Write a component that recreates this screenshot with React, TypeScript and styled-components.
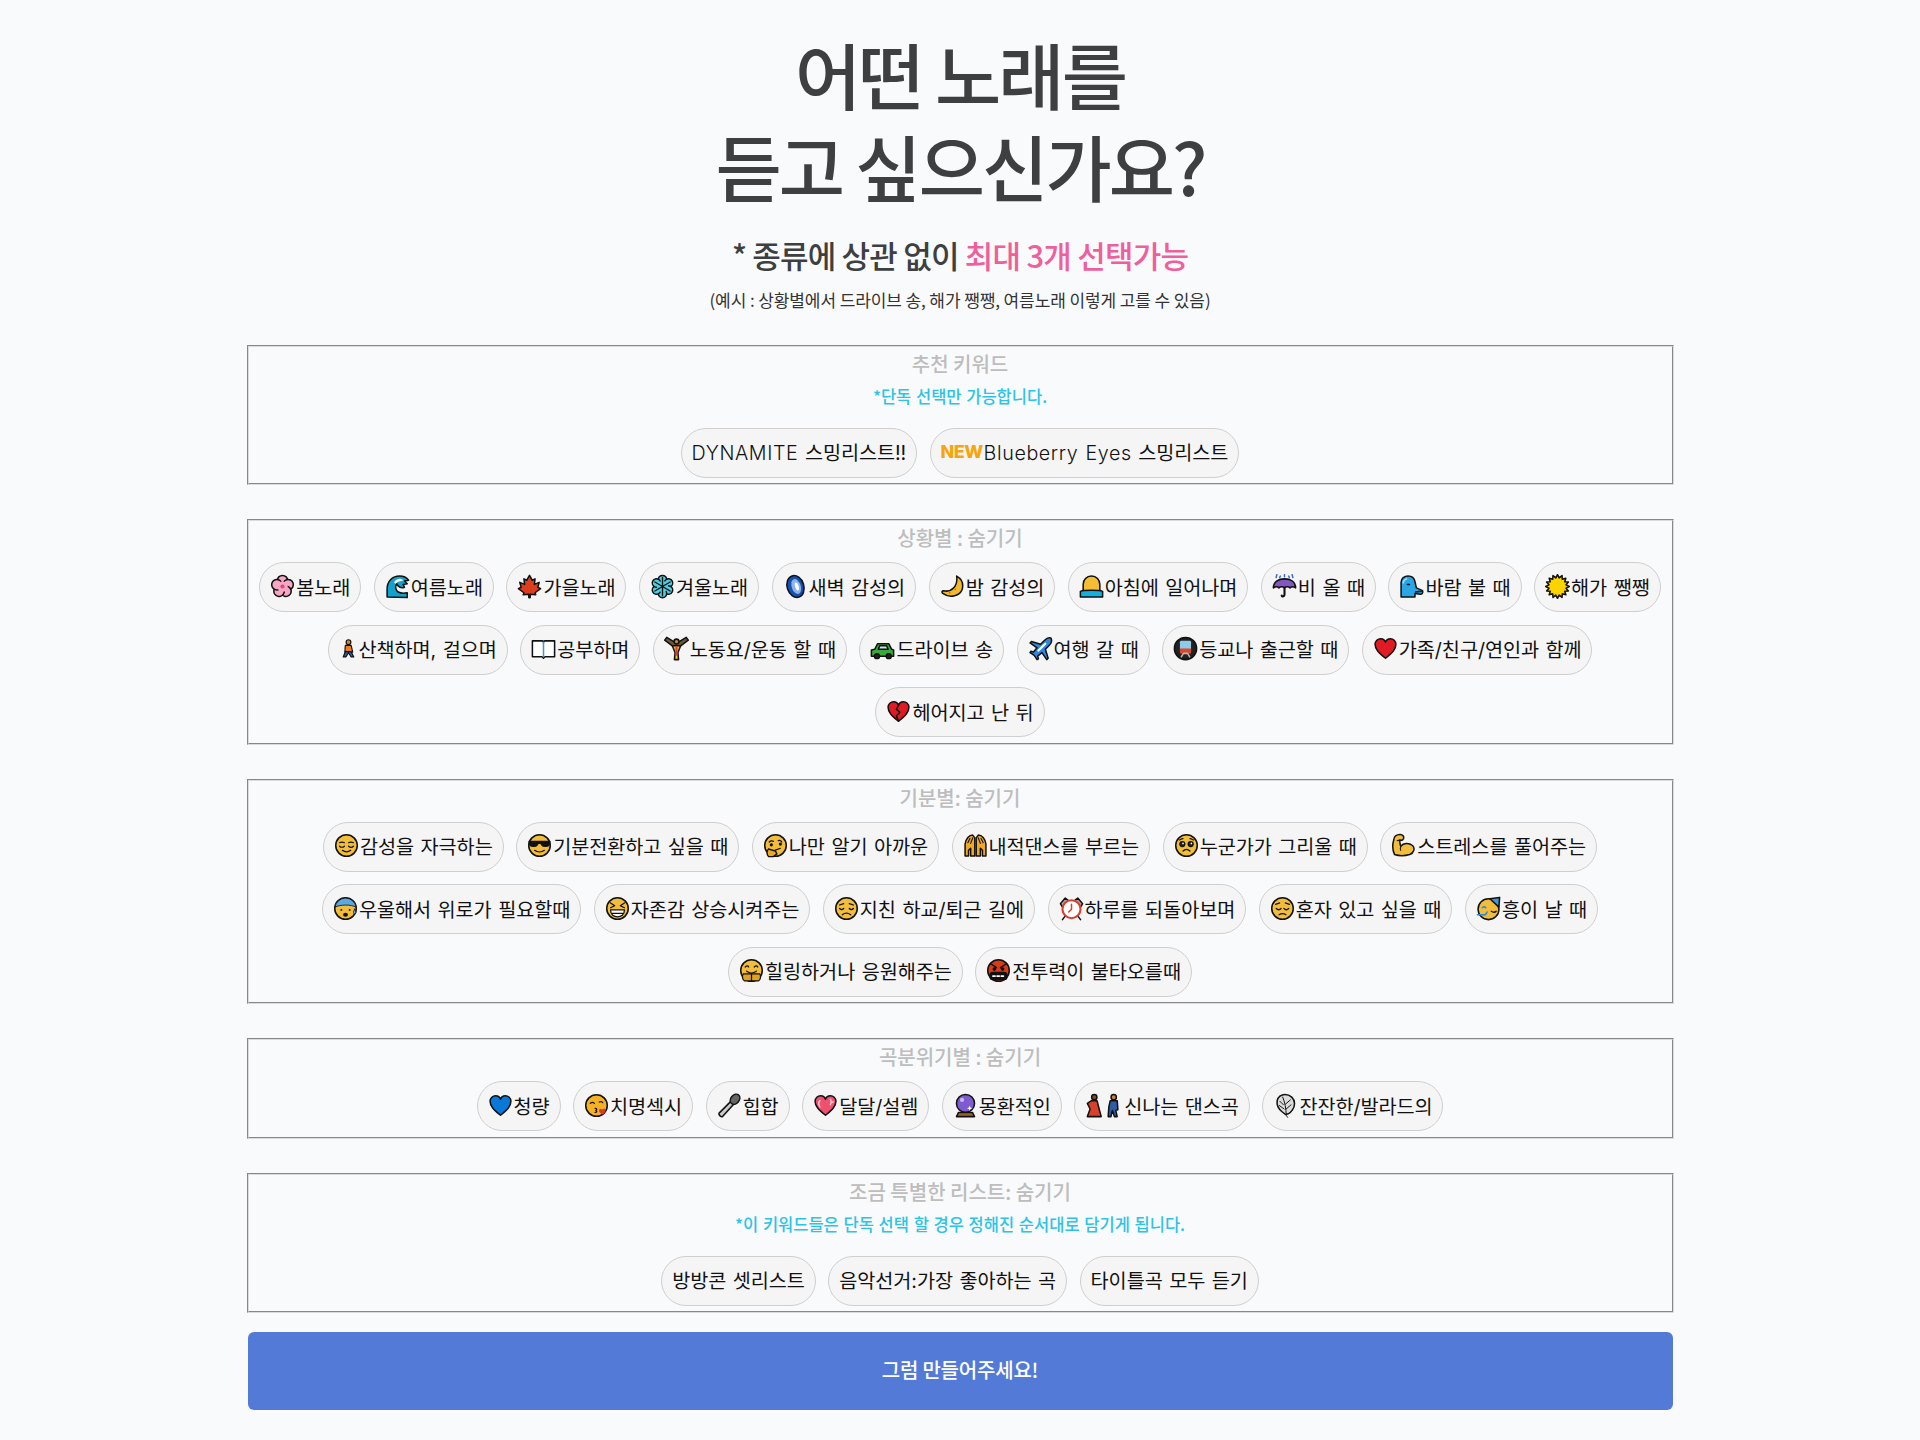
import React from "react";
import styled, { createGlobalStyle } from "styled-components";

const GlobalStyle = createGlobalStyle`
  body {
    margin: 0;
    background: #f9fafb;
    color: #222;
    font-family: "Noto Sans CJK KR", sans-serif;
  }
`;

const Page = styled.main`
  width: 1427px;
  margin: 0 auto;
  padding: 27px 0 30px;
`;

const Title = styled.h1`
  margin: 0;
  text-align: center;
  font-size: 72px;
  line-height: 92px;
  font-weight: 500;
  letter-spacing: -2.9px;
  color: #3d3f41;
`;

const Subtitle = styled.h2`
  margin: 24px 0 0;
  text-align: center;
  font-size: 31px;
  line-height: 40px;
  font-weight: 500;
  letter-spacing: -0.8px;
  color: #3d3f41;
`;

const Pink = styled.span`
  color: #ef5f9c;
`;

const Example = styled.p`
  margin: 12.5px 0 33.3px;
  text-align: center;
  font-size: 17px;
  line-height: 24px;
  letter-spacing: -0.1px;
  color: #333;
`;

const Section = styled.section`
  border: 2px groove #dcdcdc;
  padding: 0 0 5.5px;
  margin-bottom: 34px;

  &:last-of-type {
    margin-bottom: 18.7px;
  }
`;

const SectionTitle = styled.h3`
  margin: 0;
  height: 41px;
  padding-top: 2px;
  box-sizing: border-box;
  text-align: center;
  font-size: 20px;
  line-height: 30px;
  font-weight: 500;
  letter-spacing: 0;
  color: #bdbdbd;
`;

const Note = styled.p`
  margin: 0;
  height: 40px;
  text-align: center;
  font-size: 16.5px;
  line-height: 17px;
  font-weight: 500;
  letter-spacing: 0;
  word-spacing: 1px;
  color: #2bc4e6;
`;

const ChipRow = styled.div`
  display: flex;
  flex-wrap: wrap;
  justify-content: center;
  column-gap: 12.5px;
  row-gap: 12.5px;
`;

const Chip = styled.button`
  display: inline-flex;
  align-items: center;
  gap: 1px;
  height: 50px;
  padding: 0 10px 2px;
  border: 1px solid #cfcfcf;
  border-radius: 25px;
  background: #f5f5f5;
  color: #111;
  font-family: Inter, "Noto Sans CJK KR", sans-serif;
  font-size: 19.7px;
  letter-spacing: -0.1px;
  word-spacing: 1.1px;
  white-space: pre;
`;

const NewTag = styled.span`
  color: #f5a50f;
  font-weight: 800;
  font-size: 18px;
  letter-spacing: -0.6px;
`;

const LatinText = styled.span`
  font-weight: 300;
  letter-spacing: 0.6px;
`;

const Submit = styled.button`
  display: block;
  width: 1425px;
  height: 78px;
  margin: 0 auto;
  padding: 0 0 2px;
  border: 0;
  border-radius: 6px;
  background: #527ad6;
  color: #fff;
  font-family: "Noto Sans CJK KR", sans-serif;
  font-size: 20px;
  font-weight: 500;
  letter-spacing: -0.2px;
`;

const EmojiIcon = styled.svg<{ $width: number }>`
  width: ${(p) => p.$width}px;
  height: 25px;
  flex: none;
  stroke: #111;
  stroke-width: 2.2;
  stroke-linejoin: round;
  stroke-linecap: round;
`;

const burst = (n: number, r1: number, r2: number) =>
  Array.from({ length: n * 2 }, (_, i) => {
    const a = (i * Math.PI) / n;
    const r = i % 2 ? r2 : r1;
    return `${(18 + r * Math.sin(a)).toFixed(1)},${(18 - r * Math.cos(a)).toFixed(1)}`;
  }).join(" ");

const FACE = "#f2bd3a";

const Face = ({ fill = FACE, children }: { fill?: string; children?: React.ReactNode }) => (
  <>
    <circle cx="18" cy="18" r="15.5" fill={fill} />
    <g fill="none" strokeWidth="1.8">
      {children}
    </g>
  </>
);

const HEART = "M18 32C8 24 3 19 3 12c0-5 4-8 8-8 3 0 6 2 7 5 1-3 4-5 7-5 4 0 8 3 8 8 0 7-5 12-15 20z";

const icons: Record<string, React.ReactNode> = {
  blossom: (
    <>
      {[0, 72, 144, 216, 288].map((r) => (
        <circle key={r} cx="18" cy="9.5" r="7.5" fill="#f7a6c4" transform={`rotate(${r} 18 18)`} />
      ))}
      <circle cx="18" cy="18" r="7.5" fill="#f7a6c4" stroke="none" />
      <circle cx="18" cy="18" r="3" fill="#e8437f" stroke="none" />
    </>
  ),
  wave: (
    <>
      <path d="M3 33V22C3 10 11 3 21 3c5 0 10 2 13 6l-6 1 4 4-6 1 2 4c-5 2-10-1-11-5-3 3-2 9 2 12 4 2 8 2 13 1v7z" fill="#12a2cc" />
      <path d="M13 12c2-3 5-5 9-5l5 2-4 1-4 1-4 3z" fill="#fff" stroke="none" />
    </>
  ),
  maple: (
    <polygon
      points="18,2 22,9 26,7 25,15 32,12 30,19 34,21 26,27 27,30 19,29 19,34 17,34 17,29 9,30 10,27 2,21 6,19 4,12 11,15 10,7 14,9"
      fill="#dc3d1c"
    />
  ),
  snow: (
    <>
      {[0, 60, 120, 180, 240, 300].map((r) => (
        <circle key={r} cx="18" cy="8" r="6" fill="#4fcfe4" transform={`rotate(${r} 18 18)`} />
      ))}
      <circle cx="18" cy="18" r="8" fill="#4fcfe4" stroke="none" />
      <path d="M18 5v26M7 11.5l22 13M7 24.5l22-13" fill="none" strokeWidth="2" />
    </>
  ),
  dawn: (
    <>
      <ellipse cx="18" cy="18" rx="12" ry="16" fill="#1552b0" transform="rotate(-18 18 18)" />
      <ellipse cx="19" cy="18" rx="6.5" ry="11" fill="#8fb2ee" stroke="none" transform="rotate(-18 19 18)" />
      <ellipse cx="20" cy="18" rx="2.5" ry="6" fill="#fff" stroke="none" transform="rotate(-18 20 18)" />
    </>
  ),
  moon: (
    <>
      <path d="M24 3c7 4 10 11 8 19-3 9-17 14-28 6-2-2-1-4 1-4 11 3 21-6 19-21z" fill="#f2b92e" />
      <circle cx="22" cy="22" r="1.3" fill="#b5821a" stroke="none" />
      <circle cx="14" cy="27" r="1.3" fill="#b5821a" stroke="none" />
    </>
  ),
  sunrise: (
    <>
      <path d="M6 26V15C6 8 11 3 18 3s12 5 12 12v11z" fill="#f5bd33" />
      <path d="M2 25c5-2 27-2 32 0v8H2z" fill="#14b0e0" />
    </>
  ),
  umbrella: (
    <>
      <path d="M2 20C2 11 9 7 18 7s16 4 16 13c-3-2-6-2-8 0-2-2-6-2-8 0-2-2-6-2-8 0-2-2-5-2-8 0z" fill="#8258c0" />
      <path d="M18 20v10c0 3-4 3-4 1" fill="none" strokeWidth="3" />
      <path d="M7 1l-1 4M18 1v3M29 1l1 4M12 3l-1 2M24 3l1 2" fill="none" stroke="#3a6ec8" />
    </>
  ),
  wind: (
    <>
      <path d="M3 33V12C3 6 8 3 13 3s9 3 10 8l2 9 9 4c1 3-1 5-3 5l-8-1v5z" fill="#2aa6e4" />
      <path d="M12 15h3M24 26l8-1" fill="none" />
      <path d="M6 13c0-3 2-5 5-6" fill="none" stroke="#a8dcf8" />
    </>
  ),
  sun: <polygon points={burst(16, 17, 12.5)} fill="#fbd400" />,
  walker: (
    <>
      <circle cx="18" cy="6" r="4.5" fill="#c98a3c" />
      <path d="M12 12h11l3 13H11z" fill="#ef7c1d" />
      <path d="M12 24L8 34h5l5-8 5 8h5l-5-10z" fill="#2f5ea8" />
    </>
  ),
  book: (
    <>
      <path d="M2 7h14c1 0 2 1 2 2 0-1 1-2 2-2h14v23H20l-2 2-2-2H2z" fill="#fff" />
      <path d="M18 9v21" fill="none" stroke="#4a90d8" />
    </>
  ),
  lifter: (
    <>
      <path d="M1 6l12 9h10L35 6l-3-4-10 6h-8L4 2z" fill="#6b5a3a" />
      <circle cx="18" cy="8" r="3.5" fill="#c98a3c" />
      <path d="M12 14l4 10-1 10h6l-1-10 4-10z" fill="#f0c030" />
      <path d="M18 16v11" fill="none" stroke="#d8402c" strokeWidth="3" />
    </>
  ),
  car: (
    <>
      <path d="M2 29v-9l5-1 4-8h16l4 8 3 1v9z" fill="#3aa83a" />
      <path d="M14 14h10l2 5H12z" fill="#bfe6f5" />
      <circle cx="10" cy="29" r="3.5" fill="#222" />
      <circle cx="27" cy="29" r="3.5" fill="#222" />
    </>
  ),
  plane: (
    <>
      <path d="M33 3c-3-1-7 1-9 3L18 12 5 8 3 10l10 7-5 6-4-1-1 2 6 4 4 6 2-1-1-4 6-5 7 10 2-2-4-13 6-6c2-2 4-6 2-10z" fill="#2e88dc" />
      <path d="M25 11l-10 10" fill="none" stroke="#fff" strokeWidth="3" />
    </>
  ),
  metro: (
    <>
      <circle cx="18" cy="18" r="16" fill="#222" />
      <rect x="10" y="7" width="16" height="18" rx="2" fill="#8ecbe8" stroke="none" />
      <rect x="10" y="18" width="16" height="7" fill="#d9482c" stroke="none" />
      <path d="M12 30l3-5h6l3 5" fill="none" stroke="#b8b8b8" />
    </>
  ),
  heart: <path d={HEART} fill="#e01b24" />,
  broken: (
    <>
      <path d={HEART} fill="#e01b24" />
      <path d="M18 9l-3 6 5 4-5 5 3 8" fill="none" />
    </>
  ),
  relieved: (
    <Face>
      <path d="M8 14c2-1 5-1 7 0M21 14c2-1 5-1 7 0" />
      <path d="M8 19c2 2 5 2 7 0M21 19c2 2 5 2 7 0M12 25c4 3 8 3 12 0" />
    </Face>
  ),
  cool: (
    <Face>
      <path d="M3 12h30l-1 5c-1 3-9 3-11 0l-1-2h-4l-1 2c-2 3-10 3-11 0z" fill="#111" />
      <path d="M11 25c4 3 10 3 14 0" />
    </Face>
  ),
  think: (
    <Face>
      <path d="M9 13c2-2 4-2 6-1M22 11c2-1 4 0 5 2" />
      <circle cx="12" cy="17" r="1.4" fill="#111" />
      <circle cx="25" cy="16" r="1.4" fill="#111" />
      <path d="M17 25l8-3" />
      <path d="M8 34c-3-3-3-9 0-11l10 3 2 4-5 4z" fill="#e8a828" strokeWidth="2" />
    </Face>
  ),
  hands: (
    <>
      <path d="M3 33V16C4 8 9 3 14 3l3 4v26h-6V22l-3 3v8z" fill="#f0a828" />
      <path d="M33 33V16C32 8 27 3 22 3l-3 4v26h6V22l3 3v8z" fill="#f0a828" />
      <path d="M7 14l3-6M11 15l3-8M29 14l-3-6M25 15l-3-8" fill="none" strokeWidth="1.6" />
    </>
  ),
  plead: (
    <Face>
      <circle cx="12" cy="16" r="3.6" fill="#222" />
      <circle cx="24" cy="16" r="3.6" fill="#222" />
      <circle cx="13" cy="15" r="1.2" fill="#fff" stroke="none" />
      <circle cx="25" cy="15" r="1.2" fill="#fff" stroke="none" />
      <path d="M13 26c3-3 7-3 10 0M8 10c2-1 4-2 5-2M28 10c-2-1-4-2-5-2" />
    </Face>
  ),
  muscle: (
    <>
      <path
        d="M4 10C4 5 8 2 13 2c4 0 6 3 5 6-1 2-3 3-5 2-1 3 0 6 1 9 4-5 12-5 17-1 4 4 2 11-4 13-7 2-16 2-22 0-3-7-3-15-1-21z"
        fill="#f2bd3a"
      />
      <path d="M13 10l-4 1M14 20c-1 2-1 3 0 5" fill="none" strokeWidth="1.6" />
    </>
  ),
  fear: (
    <>
      <circle cx="18" cy="18" r="15.5" fill={FACE} />
      <path d="M2.7 16a15.5 15.5 0 0 1 30.6 0c-8-4-22-4-30.6 0z" fill="#5da8e0" strokeWidth="1.2" />
      <circle cx="12" cy="20" r="1.4" fill="#111" stroke="none" />
      <circle cx="24" cy="20" r="1.4" fill="#111" stroke="none" />
      <ellipse cx="18" cy="27" rx="3.5" ry="3" fill="#111" stroke="none" />
      <path d="M31 19c2 3 3 5 1 7-3 0-3-3-1-7z" fill="#6fc0f0" strokeWidth="1.2" />
    </>
  ),
  laugh: (
    <Face>
      <path d="M8 10l6 4-6 3M28 10l-6 4 6 3" />
      <path d="M8 20h20c0 7-5 10-10 10S8 27 8 20z" fill="#fff" />
      <path d="M10 25h16" />
    </Face>
  ),
  tired: (
    <Face>
      <path d="M8 13l6-2M28 13l-6-2M8 18c2 2 4 2 6 0M22 18c2 2 4 2 6 0M12 27c4-3 8-3 12 0" />
    </Face>
  ),
  alarm: (
    <>
      <path d="M2 11l7-8 5 4-9 9zM34 11l-7-8-5 4 9 9z" fill="#aaa" />
      <circle cx="18" cy="19" r="13" fill="#fff" stroke="#d8402c" strokeWidth="3" />
      <path d="M18 12v7l-4 4" fill="none" stroke="#d8402c" />
      <path d="M8 30l-3 4M28 30l3 4" fill="none" />
    </>
  ),
  pensive: (
    <Face>
      <path d="M9 18c2 2 5 2 7 0M20 18c2 2 5 2 7 0M8 12l6-2M28 12l-6-2M13 27c3-2 7-2 10 0" />
    </Face>
  ),
  party: (
    <>
      <circle cx="18" cy="19" r="15" fill={FACE} />
      <path d="M20 4l14-2-1 14z" fill="#3a9ae0" />
      <path d="M9 17c2-2 4-2 5 0M9 27c4 1 6-1 7-4M2 27h12" fill="none" stroke="#2e88dc" />
      <path d="M22 22c3 2 5 2 7 0" fill="none" strokeWidth="1.8" />
    </>
  ),
  hug: (
    <Face>
      <path d="M9 13c2-2 4-2 5 0M22 13c2-2 4-2 5 0M11 19c4 3 10 3 14 0" />
      <path d="M6 23h24c2 3 1 9-2 10H8c-3-1-4-7-2-10z" fill="#e2a11f" />
      <path d="M18 23v10" />
    </Face>
  ),
  swear: (
    <>
      <circle cx="18" cy="18" r="15.5" fill="#d93a18" />
      <path d="M8 9l7 5M28 9l-7 5" fill="none" />
      <circle cx="12" cy="16" r="1.5" fill="#111" />
      <circle cx="24" cy="16" r="1.5" fill="#111" />
      <rect x="6" y="21" width="24" height="10" rx="4" fill="#111" />
      <path d="M10 26h3M16 26h3M22 26h3" fill="none" stroke="#fff" strokeWidth="2.6" />
    </>
  ),
  blueHeart: <path d={HEART} fill="#0a78d8" />,
  kiss: (
    <>
      <circle cx="18" cy="18" r="15.5" fill="#f4b026" />
      <path d="M9 15c2-2 4-2 6 0M22 13c2-1 4-1 5 1" fill="none" strokeWidth="1.8" />
      <path d="M16 22c3 0 3 2 1 3 2 1 2 3-1 3" fill="none" strokeWidth="1.8" />
      <path d="M27 31c-5-3-6-5-5-7s3-1 4 0c1-1 4-2 5 0s-1 4-4 7z" fill="#d93a2c" stroke="none" />
    </>
  ),
  mic: (
    <>
      <path d="M21 11l4 4L8 34c-2 1-6-2-5-5z" fill="#c9c9c9" />
      <ellipse cx="26" cy="9" rx="6" ry="8" fill="#666" transform="rotate(40 26 9)" />
    </>
  ),
  sparkle: (
    <>
      <path d={HEART} fill="#f0506e" />
      <path d="M10 11c-2 2-2 6 0 9M25 9l1 3 3 1-3 1-1 3" fill="none" stroke="#ffc4d0" />
    </>
  ),
  ball: (
    <>
      <circle cx="18" cy="15" r="13" fill="#7c5cd0" />
      <path d="M8 28h20l3 6H5z" fill="#a0622c" />
      <path d="M24 18l1 3 3 1-3 1-1 3-1-3-3-1 3-1z" fill="#fff" stroke="none" />
      <circle cx="13" cy="10" r="3" fill="#c8b8f5" stroke="none" />
    </>
  ),
  dancers: (
    <>
      <circle cx="13" cy="6" r="3.8" fill="#8a4a20" />
      <path d="M9 11h8l3 12 3 11H3l4-11-4-8z" fill="#d8402c" />
      <circle cx="41" cy="6" r="3.8" fill="#c98a3c" />
      <path d="M36 11h10l1 13-3 1 2 9h-4l-3-9-2 9h-4l1-14z" fill="#2e5ea8" />
    </>
  ),
  feather: (
    <>
      <path d="M17 2c8 0 14 6 14 13 0 7-5 13-9 15l-4 1-5-4C8 23 5 18 6 11c1-5 6-9 11-9z" fill="#dcdcdc" />
      <path d="M14 6c3 7 5 17 5 26l2 3M10 12l5 5M9 18l7 5M25 10l-7 6M26 17l-7 6" fill="none" strokeWidth="1.4" />
    </>
  ),
};

const iconWidths: Record<string, number> = { walker: 19, dancers: 38 };

interface Keyword {
  icon?: string;
  label: string;
  latin?: string;
  isNew?: boolean;
}

const recommended: Keyword[] = [
  { latin: "DYNAMITE", label: " 스밍리스트!!" },
  { latin: "Blueberry Eyes", label: " 스밍리스트", isNew: true },
];

const situations: Keyword[] = [
  { icon: "blossom", label: "봄노래" },
  { icon: "wave", label: "여름노래" },
  { icon: "maple", label: "가을노래" },
  { icon: "snow", label: "겨울노래" },
  { icon: "dawn", label: "새벽 감성의" },
  { icon: "moon", label: "밤 감성의" },
  { icon: "sunrise", label: "아침에 일어나며" },
  { icon: "umbrella", label: "비 올 때" },
  { icon: "wind", label: "바람 불 때" },
  { icon: "sun", label: "해가 쨍쨍" },
  { icon: "walker", label: "산책하며, 걸으며" },
  { icon: "book", label: "공부하며" },
  { icon: "lifter", label: "노동요/운동 할 때" },
  { icon: "car", label: "드라이브 송" },
  { icon: "plane", label: "여행 갈 때" },
  { icon: "metro", label: "등교나 출근할 때" },
  { icon: "heart", label: "가족/친구/연인과 함께" },
  { icon: "broken", label: "헤어지고 난 뒤" },
];

const moods: Keyword[] = [
  { icon: "relieved", label: "감성을 자극하는" },
  { icon: "cool", label: "기분전환하고 싶을 때" },
  { icon: "think", label: "나만 알기 아까운" },
  { icon: "hands", label: "내적댄스를 부르는" },
  { icon: "plead", label: "누군가가 그리울 때" },
  { icon: "muscle", label: "스트레스를 풀어주는" },
  { icon: "fear", label: "우울해서 위로가 필요할때" },
  { icon: "laugh", label: "자존감 상승시켜주는" },
  { icon: "tired", label: "지친 하교/퇴근 길에" },
  { icon: "alarm", label: "하루를 되돌아보며" },
  { icon: "pensive", label: "혼자 있고 싶을 때" },
  { icon: "party", label: "흥이 날 때" },
  { icon: "hug", label: "힐링하거나 응원해주는" },
  { icon: "swear", label: "전투력이 불타오를때" },
];

const vibes: Keyword[] = [
  { icon: "blueHeart", label: "청량" },
  { icon: "kiss", label: "치명섹시" },
  { icon: "mic", label: "힙합" },
  { icon: "sparkle", label: "달달/설렘" },
  { icon: "ball", label: "몽환적인" },
  { icon: "dancers", label: "신나는 댄스곡" },
  { icon: "feather", label: "잔잔한/발라드의" },
];

const special: Keyword[] = [
  { label: "방방콘 셋리스트" },
  { label: "음악선거:가장 좋아하는 곡" },
  { label: "타이틀곡 모두 듣기" },
];

const Chips = ({ items }: { items: Keyword[] }) => (
  <ChipRow>
    {items.map((item) => {
      const width = item.icon ? iconWidths[item.icon] ?? 25 : 25;
      return (
        <Chip key={item.label} type="button">
          {item.isNew && <NewTag>NEW</NewTag>}
          {item.icon && (
            <EmojiIcon $width={width} viewBox={`0 0 ${width === 38 ? 54 : 36} 36`}>
              {icons[item.icon]}
            </EmojiIcon>
          )}
          <span>
            {item.latin && <LatinText>{item.latin}</LatinText>}
            {item.label}
          </span>
        </Chip>
      );
    })}
  </ChipRow>
);

export default function App() {
  return (
    <Page>
      <GlobalStyle />
      <Title>
        어떤 노래를
        <br />
        듣고 싶으신가요?
      </Title>
      <Subtitle>
        * 종류에 상관 없이 <Pink>최대 3개 선택가능</Pink>
      </Subtitle>
      <Example>(예시 : 상황별에서 드라이브 송, 해가 쨍쨍, 여름노래 이렇게 고를 수 있음)</Example>

      <Section>
        <SectionTitle>추천 키워드</SectionTitle>
        <Note>*단독 선택만 가능합니다.</Note>
        <Chips items={recommended} />
      </Section>
      <Section>
        <SectionTitle>상황별 : 숨기기</SectionTitle>
        <Chips items={situations} />
      </Section>
      <Section>
        <SectionTitle>기분별: 숨기기</SectionTitle>
        <Chips items={moods} />
      </Section>
      <Section>
        <SectionTitle>곡분위기별 : 숨기기</SectionTitle>
        <Chips items={vibes} />
      </Section>
      <Section>
        <SectionTitle>조금 특별한 리스트: 숨기기</SectionTitle>
        <Note>*이 키워드들은 단독 선택 할 경우 정해진 순서대로 담기게 됩니다.</Note>
        <Chips items={special} />
      </Section>

      <Submit type="button">그럼 만들어주세요!</Submit>
    </Page>
  );
}
